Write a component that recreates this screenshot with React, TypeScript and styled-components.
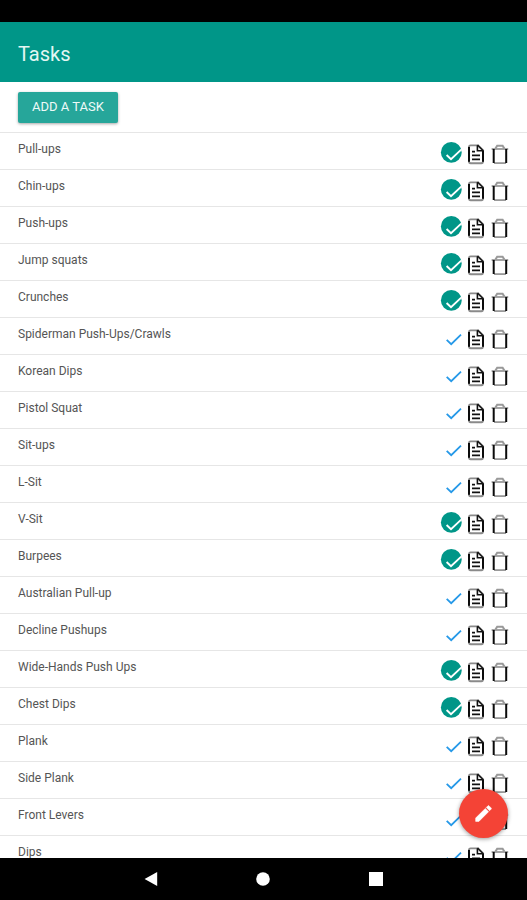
import React, { useState } from "react";
import styled, { createGlobalStyle } from "styled-components";

const GlobalStyle = createGlobalStyle`
  *, *::before, *::after { box-sizing: border-box; }
  body {
    margin: 0;
    background: #fff;
    font-family: Roboto, "Liberation Sans", sans-serif;
  }
  button { font-family: inherit; border: 0; padding: 0; cursor: pointer; }
`;

const Screen = styled.div`
  display: flex;
  flex-direction: column;
  height: 100vh;
  overflow: hidden;
`;

const StatusBar = styled.div`
  flex: none;
  height: 22px;
  background: #000;
`;

const Header = styled.header`
  flex: none;
  display: flex;
  align-items: center;
  height: 60px;
  padding: 4px 18px 0;
  background: #009688;
`;

const Title = styled.h1`
  margin: 0;
  color: #e4f6f3;
  font-size: 20px;
  line-height: 28px;
  font-weight: 400;
`;

const Content = styled.main`
  position: relative;
  flex: 1;
  min-height: 0;
  overflow: hidden;
  background: #fff;
`;

const Toolbar = styled.div`
  display: flex;
  align-items: flex-start;
  height: 51px;
  padding: 10px 18px 0;
  border-bottom: 1px solid #e6e6e6;
`;

const AddButton = styled.button`
  height: 31px;
  padding: 0 14px 2px;
  border-radius: 2px;
  background: #26a69a;
  color: #eefaf8;
  font-size: 13px;
  line-height: 20px;
  box-shadow: 0 1px 3px rgba(0, 0, 0, 0.35);
`;

const List = styled.ul`
  margin: 0;
  padding: 0;
  list-style: none;
`;

const Row = styled.li`
  display: flex;
  align-items: flex-start;
  justify-content: space-between;
  height: 37px;
  padding: 0 15px 0 18px;
  border-bottom: 1px solid #e6e6e6;
`;

const Name = styled.span`
  padding-top: 8px;
  color: #555;
  font-size: 12px;
  line-height: 16px;
`;

const Actions = styled.div`
  display: flex;
  padding-top: 9px;
`;

const IconButton = styled.button`
  width: 24px;
  height: 24px;
  background: none;

  svg {
    display: block;
    overflow: visible;
  }
`;

const Fab = styled.button`
  position: absolute;
  right: 19px;
  bottom: 20px;
  display: grid;
  place-items: center;
  width: 49px;
  height: 49px;
  border-radius: 50%;
  background: #f44336;
  box-shadow: 0 1px 4px rgba(0, 0, 0, 0.4);
`;

const SystemNav = styled.nav`
  flex: none;
  display: grid;
  grid-template-columns: repeat(3, 1fr);
  height: 42px;
  padding: 0 18%;
  background: #000;
`;

const NavButton = styled.button`
  display: grid;
  place-items: center;
  background: none;
`;

function DoneIcon() {
  return (
    <svg width="24" height="24" viewBox="0 0 24 24" fill="none">
      <circle cx="11.3" cy="10.4" r="10.4" fill="#009688" />
      <path d="M6.6 13 11 17.2 21.2 7.6" stroke="#fff" strokeWidth="1.9" />
    </svg>
  );
}

function OpenIcon() {
  return (
    <svg width="24" height="24" viewBox="0 0 24 24" fill="none">
      <path d="M6.7 12.8 11.2 17.2 21 7.6" stroke="#2699e8" strokeWidth="1.8" />
    </svg>
  );
}

function NoteIcon() {
  return (
    <svg width="24" height="24" viewBox="0 0 24 24" fill="none">
      <path
        d="M13.5 3.4H6.6Q5 3.4 5 5V19.6Q5 21.2 6.6 21.2H17.4Q19 21.2 19 19.6V8.6"
        stroke="#8a8a8a"
        strokeWidth="1.9"
      />
      <path d="M5 5V19.8M19 8.6V19.8" stroke="#0b0b0b" strokeWidth="2" />
      <path d="M13.4 2.9 19.5 8.9" stroke="#222" strokeWidth="1.9" />
      <path d="M13.4 3.6V8.8H18.8" stroke="#111" strokeWidth="1.6" />
      <path d="M8 9.6H11M8 13.4H16M8 17.3H16" stroke="#111" strokeWidth="1.8" />
    </svg>
  );
}

function TrashIcon() {
  return (
    <svg width="24" height="24" viewBox="0 0 24 24" fill="none">
      <path d="M3.6 7H20.2" stroke="#9a9a9a" strokeWidth="1.8" />
      <path d="M7.4 6.6 9.2 3.7H14.6L16.4 6.6" stroke="#999" strokeWidth="2" />
      <path d="M6 21.1H18" stroke="#999" strokeWidth="1.8" />
      <path d="M5.7 7V20.9M18.2 7V20.9" stroke="#0b0b0b" strokeWidth="2" />
    </svg>
  );
}

interface Task {
  name: string;
  done: boolean;
}

const initialTasks: Task[] = [
  { name: "Pull-ups", done: true },
  { name: "Chin-ups", done: true },
  { name: "Push-ups", done: true },
  { name: "Jump squats", done: true },
  { name: "Crunches", done: true },
  { name: "Spiderman Push-Ups/Crawls", done: false },
  { name: "Korean Dips", done: false },
  { name: "Pistol Squat", done: false },
  { name: "Sit-ups", done: false },
  { name: "L-Sit", done: false },
  { name: "V-Sit", done: true },
  { name: "Burpees", done: true },
  { name: "Australian Pull-up", done: false },
  { name: "Decline Pushups", done: false },
  { name: "Wide-Hands Push Ups", done: true },
  { name: "Chest Dips", done: true },
  { name: "Plank", done: false },
  { name: "Side Plank", done: false },
  { name: "Front Levers", done: false },
  { name: "Dips", done: false },
];

export default function App() {
  const [tasks, setTasks] = useState(initialTasks);

  const toggle = (name: string) =>
    setTasks((all) => all.map((t) => (t.name === name ? { ...t, done: !t.done } : t)));
  const remove = (name: string) => setTasks((all) => all.filter((t) => t.name !== name));

  return (
    <Screen>
      <GlobalStyle />
      <StatusBar />
      <Header>
        <Title>Tasks</Title>
      </Header>
      <Content>
        <Toolbar>
          <AddButton type="button">ADD A TASK</AddButton>
        </Toolbar>
        <List>
          {tasks.map((task) => (
            <Row key={task.name}>
              <Name>{task.name}</Name>
              <Actions>
                <IconButton
                  type="button"
                  aria-label={`Complete ${task.name}`}
                  aria-pressed={task.done}
                  onClick={() => toggle(task.name)}
                >
                  {task.done ? <DoneIcon /> : <OpenIcon />}
                </IconButton>
                <IconButton type="button" aria-label={`Notes for ${task.name}`}>
                  <NoteIcon />
                </IconButton>
                <IconButton
                  type="button"
                  aria-label={`Delete ${task.name}`}
                  onClick={() => remove(task.name)}
                >
                  <TrashIcon />
                </IconButton>
              </Actions>
            </Row>
          ))}
        </List>
        <Fab type="button" aria-label="Edit tasks">
          <svg width="21" height="21" viewBox="0 0 24 24" fill="#fff">
            <path
              d="M3 17.25V21h3.75L17.81 9.94l-3.75-3.75L3 17.25zM20.71 7.04a1 1 0 0 0 0-1.41l-2.34-2.34a1 1 0 0 0-1.41 0l-1.83 1.83 3.75 3.75 1.83-1.83z"
              stroke="#fff"
              strokeWidth="0.6"
              strokeLinejoin="round"
            />
          </svg>
        </Fab>
      </Content>
      <SystemNav aria-label="System">
        <NavButton type="button" aria-label="Back">
          <svg width="14" height="14" viewBox="0 0 14 14" fill="#fff">
            <path d="M13.2 0V14L0.6 7z" />
          </svg>
        </NavButton>
        <NavButton type="button" aria-label="Home">
          <svg width="14" height="14" viewBox="0 0 14 14" fill="#fff">
            <circle cx="7" cy="7" r="6.8" />
          </svg>
        </NavButton>
        <NavButton type="button" aria-label="Recent apps">
          <svg width="14" height="14" viewBox="0 0 14 14" fill="#fff">
            <rect width="14" height="14" />
          </svg>
        </NavButton>
      </SystemNav>
    </Screen>
  );
}
